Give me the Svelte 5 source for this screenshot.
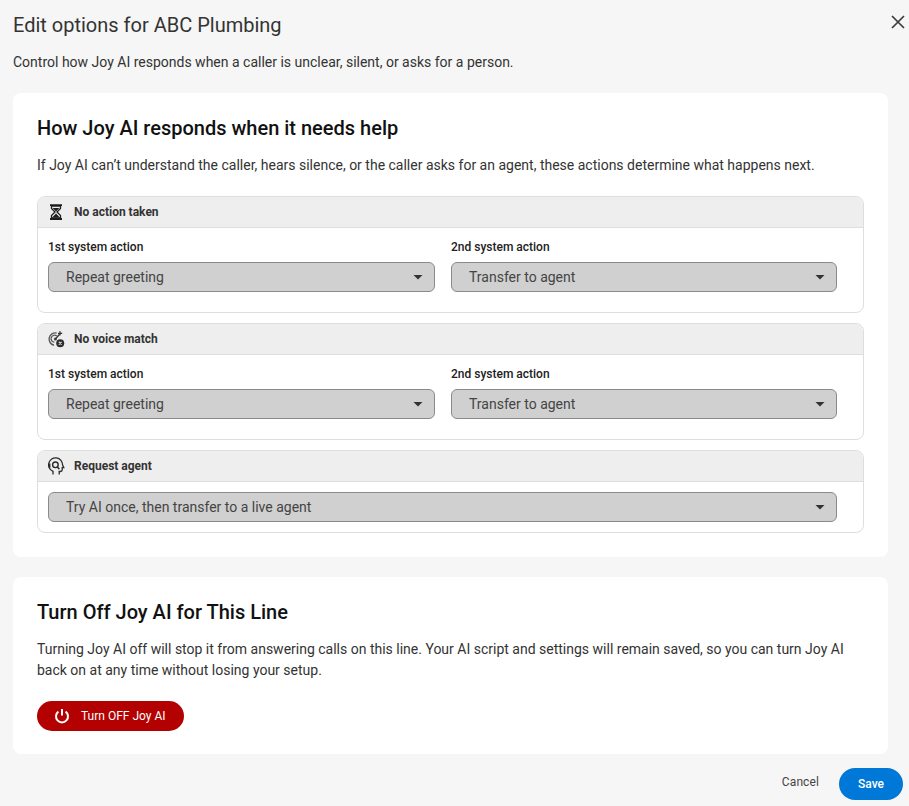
<script lang="ts">
  const panels = [
    {
      title: 'No action taken',
      icon: 'hourglass',
      selects: [
        { label: '1st system action', value: 'Repeat greeting' },
        { label: '2nd system action', value: 'Transfer to agent' },
      ],
    },
    {
      title: 'No voice match',
      icon: 'voice',
      selects: [
        { label: '1st system action', value: 'Repeat greeting' },
        { label: '2nd system action', value: 'Transfer to agent' },
      ],
    },
    {
      title: 'Request agent',
      icon: 'agent',
      selects: [{ label: '', value: 'Try AI once, then transfer to a live agent' }],
    },
  ];
</script>

<div class="dialog">
  <header class="top">
    <h1>Edit options for ABC Plumbing</h1>
    <button class="close" type="button" aria-label="Close">
      <svg width="14" height="14" viewBox="0 0 14 14" fill="none" aria-hidden="true">
        <path d="M1 1L13 13M13 1L1 13" stroke="#3c3c3c" stroke-width="1.7" />
      </svg>
    </button>
  </header>
  <p class="intro">Control how Joy AI responds when a caller is unclear, silent, or asks for a person.</p>

  <section class="card help">
    <h2>How Joy AI responds when it needs help</h2>
    <p class="lead">If Joy AI can’t understand the caller, hears silence, or the caller asks for an agent, these actions determine what happens next.</p>

    <div class="panels">
      {#each panels as panel}
        <div class="panel">
          <div class="panel-head">
            <span class="panel-icon">
              {#if panel.icon === 'hourglass'}
                <svg width="18" height="18" viewBox="0 0 18 18" aria-hidden="true">
                  <path d="M3 2.2h12M3 16h12" stroke="#1e1e1e" stroke-width="1.8" fill="none" />
                  <path d="M4.5 3v2.4L8 9l-3.5 3.6V15h9v-2.4L10 9l3.5-3.6V3z" fill="none" stroke="#1e1e1e" stroke-width="1.3" />
                  <path d="M5.6 5h6.8L9 8.4zM5.2 14.6L9 10.4l3.8 4.2z" fill="#1e1e1e" />
                </svg>
              {:else if panel.icon === 'voice'}
                <svg width="18" height="18" viewBox="0 0 18 18" fill="none" aria-hidden="true">
                  <path d="M9.6 3A6.2 6.2 0 1 0 7 15.2" stroke="#5a5a5a" stroke-width="1.4" />
                  <path d="M9.8 6A3.5 3.5 0 1 0 7.4 12.2" stroke="#5a5a5a" stroke-width="1.3" />
                  <circle cx="8.4" cy="9" r="1.5" fill="#444" />
                  <path d="M8.4 9l4.4-5" stroke="#333" stroke-width="1.2" />
                  <path d="M13 1v4.4M11 3.4h4.2" stroke="#333" stroke-width="1.1" />
                  <circle cx="13.2" cy="13.2" r="4" fill="#2e2e2e" />
                  <path d="M11.8 11.8l2.8 2.8M14.6 11.8l-2.8 2.8" stroke="#eee" stroke-width="1.1" />
                </svg>
              {:else}
                <svg width="18" height="18" viewBox="0 0 18 18" fill="none" aria-hidden="true">
                  <path d="M6 17.4v-3A7 7 0 1 1 15.6 8l1.2 2.6h-1.6v2.2a1.7 1.7 0 0 1-1.7 1.7h-1.3v2.9" stroke="#2a2a2a" stroke-width="1.3" />
                  <path d="M2.6 6.4v4.4" stroke="#2a2a2a" stroke-width="1.6" />
                  <circle cx="8.4" cy="7.8" r="2.8" stroke="#2a2a2a" stroke-width="1.4" />
                  <path d="M10.4 10l2 2.2" stroke="#2a2a2a" stroke-width="1.4" />
                </svg>
              {/if}
            </span>
            <span class="panel-title">{panel.title}</span>
          </div>
          <div class="panel-body" class:single={panel.selects.length === 1}>
            {#each panel.selects as select}
              <div class="field">
                {#if select.label}
                  <span class="field-label">{select.label}</span>
                {/if}
                <button class="select" type="button">
                  <span>{select.value}</span>
                  <svg width="10" height="5" viewBox="0 0 10 5" aria-hidden="true">
                    <path d="M0.5 0h9L5 4.6z" fill="#333" />
                  </svg>
                </button>
              </div>
            {/each}
          </div>
        </div>
      {/each}
    </div>
  </section>

  <section class="card off">
    <h2>Turn Off Joy AI for This Line</h2>
    <p class="lead">Turning Joy AI off will stop it from answering calls on this line. Your AI script and settings will remain saved, so you can turn Joy AI back on at any time without losing your setup.</p>
    <button class="danger" type="button">
      <svg width="16" height="16" viewBox="0 0 16 16" fill="none" aria-hidden="true">
        <path d="M4.4 3.6a6 6 0 1 0 7.2 0" stroke="#fff" stroke-width="2" />
        <path d="M8 1v6.4" stroke="#fff" stroke-width="2" />
      </svg>
      <span>Turn OFF Joy AI</span>
    </button>
  </section>

  <footer class="actions">
    <button class="cancel" type="button">Cancel</button>
    <button class="save" type="button">Save</button>
  </footer>
</div>

<style>
  :global(body) {
    margin: 0;
    background: #f6f6f6;
  }

  .dialog {
    width: 909px;
    height: 806px;
    box-sizing: border-box;
    padding: 0 21px 0 13px;
    font-family: Roboto, 'Liberation Sans', sans-serif;
    color: #333;
    overflow: hidden;
  }

  button {
    font-family: inherit;
    cursor: pointer;
  }

  .top {
    display: flex;
    justify-content: space-between;
    align-items: flex-start;
    height: 53px;
    margin-right: -17px;
  }

  h1 {
    margin: 13px 0 0;
    font-size: 20px;
    line-height: 24px;
    font-weight: 400;
    color: #333;
  }

  .close {
    border: none;
    background: none;
    padding: 0;
    margin-top: 15px;
    width: 14px;
    height: 14px;
    display: block;
  }

  .close svg {
    display: block;
  }

  .intro {
    margin: 0 0 21px;
    font-size: 14px;
    line-height: 19px;
    color: #333;
  }

  .card {
    background: #fff;
    border-radius: 8px;
    padding: 23px 24px 24px;
  }

  h2 {
    margin: 0;
    font-size: 20px;
    line-height: 24px;
    font-weight: 500;
    color: #111;
  }

  .lead {
    margin: 15px 0 0;
    font-size: 14px;
    line-height: 21px;
    color: #333;
  }

  .panels {
    display: flex;
    flex-direction: column;
    gap: 10px;
    margin-top: 20px;
  }

  .panel {
    border: 1px solid #dedede;
    border-radius: 8px;
    overflow: hidden;
  }

  .panel-head {
    display: flex;
    align-items: center;
    height: 30px;
    background: #eeeeee;
    border-bottom: 1px solid #dedede;
    padding-left: 9px;
  }

  .panel-icon {
    width: 27px;
    display: flex;
    align-items: center;
  }

  .panel-title {
    font-size: 12px;
    font-weight: 700;
    color: #333;
  }

  .panel-body {
    display: grid;
    grid-template-columns: 387px 386px;
    gap: 16px;
    padding: 11px 26px 20px 10px;
  }

  .panel-body.single {
    grid-template-columns: 789px;
    padding-top: 10px;
    padding-bottom: 10px;
  }

  .field {
    display: flex;
    flex-direction: column;
  }

  .field-label {
    font-size: 12px;
    line-height: 16px;
    font-weight: 500;
    color: #222;
    margin-bottom: 7px;
  }

  .select {
    display: flex;
    align-items: center;
    justify-content: space-between;
    height: 30px;
    box-sizing: border-box;
    padding: 0 11px 0 17px;
    background: #d0d0d0;
    border: 1px solid #8a8a8a;
    border-radius: 6px;
    font-size: 14px;
    color: #444;
  }

  .off {
    margin-top: 20px;
    height: 177px;
    box-sizing: border-box;
  }

  .danger {
    display: flex;
    align-items: center;
    gap: 11px;
    height: 30px;
    margin-top: 20px;
    padding: 0 18px 0 17px;
    border: none;
    border-radius: 15px;
    background: #b30000;
    color: #fff;
    font-size: 12px;
    font-weight: 400;
  }

  .actions {
    display: flex;
    justify-content: flex-end;
    align-items: center;
    gap: 20px;
    margin-top: 14px;
    margin-right: -15px;
  }

  .cancel {
    border: none;
    background: none;
    padding: 0;
    font-size: 12px;
    letter-spacing: 0.1px;
    color: #444;
    margin-bottom: 4px;
  }

  .save {
    width: 64px;
    height: 32px;
    border: none;
    border-radius: 16px;
    background: #0078d7;
    color: #fff;
    font-size: 12px;
    font-weight: 500;
  }
</style>
